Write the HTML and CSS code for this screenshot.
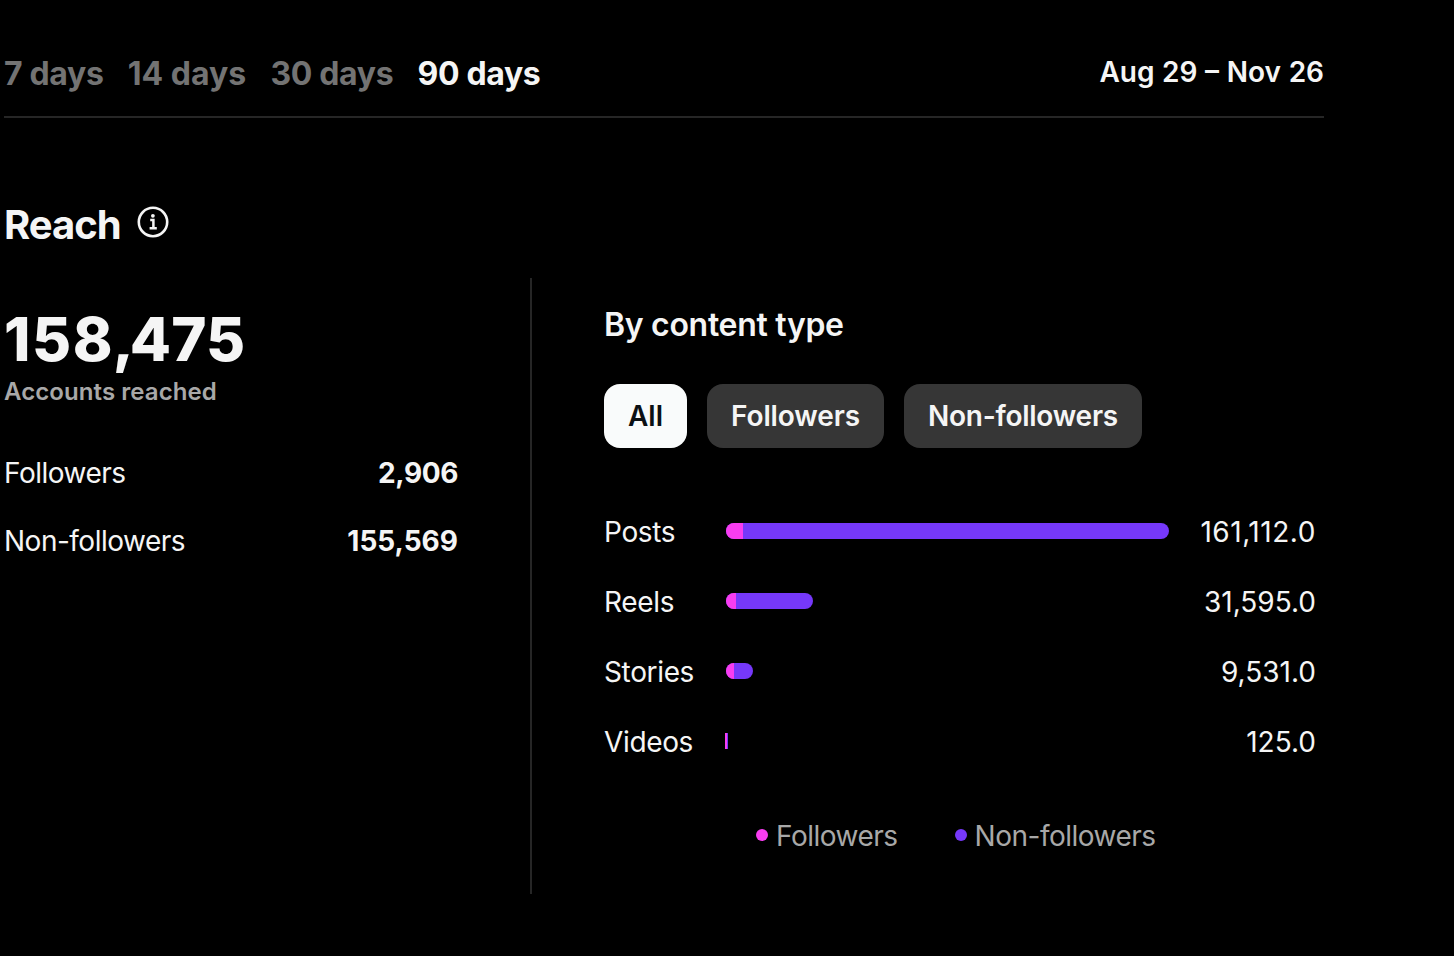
FILE: index.html
```html
<!DOCTYPE html>
<html lang="en">
<head>
    <meta charset="UTF-8">
    <meta name="viewport" content="width=device-width, initial-scale=1.0">
    <title>Reach</title>
    <link rel="stylesheet" href="styles.css">
</head>
<body>
    <div class="insights">
        <header class="topbar">
            <nav class="ranges">
                <a class="range">7 days</a>
                <a class="range range-14">14 days</a>
                <a class="range">30 days</a>
                <a class="range active">90 days</a>
            </nav>
            <div class="dates">Aug 29 – Nov 26</div>
        </header>

        <div class="heading">
            <h1>Reach</h1>
            <svg class="info" viewBox="0 0 32 32" fill="none" stroke="currentColor">
                <circle cx="16" cy="16" r="14.2" stroke-width="2.6"/>
                <path d="M13.2 14H16.4V22M12.6 22.3H19.8" stroke-width="2.5"/>
                <circle cx="15.9" cy="9.8" r="1.9" fill="currentColor" stroke="none"/>
            </svg>
        </div>

        <main class="columns">
            <section class="summary">
                <div class="total"><span class="thousands">158</span><span class="comma">,</span>475</div>
                <div class="caption">Accounts reached</div>
                <div class="stat">
                    <span class="label">Followers</span>
                    <strong class="tight">2,906</strong>
                </div>
                <div class="stat">
                    <span class="label">Non-followers</span>
                    <strong>155,569</strong>
                </div>
            </section>

            <section class="content-type">
                <h2>By content type</h2>
                <div class="filters">
                    <button class="filter selected">All</button>
                    <button class="filter">Followers</button>
                    <button class="filter">Non-followers</button>
                </div>
                <div class="chart">
                    <div class="row">
                        <span class="name">Posts</span>
                        <div class="bar" style="width: 443px"><i style="width: 17px"></i></div>
                        <span class="value loose">161,112.0</span>
                    </div>
                    <div class="row">
                        <span class="name">Reels</span>
                        <div class="bar" style="width: 87px"><i style="width: 10px"></i></div>
                        <span class="value">31,595.0</span>
                    </div>
                    <div class="row">
                        <span class="name">Stories</span>
                        <div class="bar" style="width: 27px"><i style="width: 8px"></i></div>
                        <span class="value">9,531.0</span>
                    </div>
                    <div class="row">
                        <span class="name">Videos</span>
                        <div class="bar tiny" style="width: 3px"><i style="width: 2px"></i></div>
                        <span class="value">125.0</span>
                    </div>
                </div>
                <div class="legend">
                    <span class="key"><i class="dot pink"></i><span class="label">Followers</span></span>
                    <span class="key"><i class="dot purple"></i><span class="label">Non-followers</span></span>
                </div>
            </section>
        </main>
    </div>
</body>
</html>
```
FILE: styles.css
```css
* {
    box-sizing: border-box;
}
body {
    margin: 0;
    background-color: #000;
    color: #f5f5f5;
    font-family: Inter, "Liberation Sans", sans-serif;
    font-size: 28px;
    line-height: 36px;
}
h1, h2 {
    margin: 0;
}
.insights {
    width: 1324px;
    height: 956px;
    padding-left: 4px;
}
.topbar {
    display: flex;
    justify-content: space-between;
    align-items: flex-start;
    height: 118px;
    padding-top: 54px;
    border-bottom: 2px solid #262626;
}
.ranges {
    display: flex;
    gap: 24.3px;
    padding-top: 2px;
    font-size: 32px;
    font-weight: 700;
    color: #737373;
}
.range {
    letter-spacing: -0.35px;
}
.range-14 {
    letter-spacing: 0;
}
.active {
    color: #f5f5f5;
}
.dates {
    font-weight: 600;
    word-spacing: 0.6px;
}
.heading {
    display: flex;
    gap: 16px;
    height: 160px;
    padding-top: 83px;
}
h1 {
    font-size: 40px;
    font-weight: 700;
    line-height: 48px;
    letter-spacing: -1px;
}
.info {
    width: 32px;
    height: 32px;
    margin-top: 5px;
}
.columns {
    display: flex;
    height: 616px;
}
.summary {
    width: 528px;
    padding: 25px 72px 0 0;
    border-right: 2px solid #262626;
}
.total {
    font-size: 60px;
    font-weight: 800;
    line-height: 72px;
    letter-spacing: 0.2px;
}
.thousands {
    letter-spacing: 1.6px;
}
.comma {
    margin-left: -1.5px;
    letter-spacing: -4.2px;
}
.caption {
    margin: 1px 0 47px;
    font-size: 24px;
    font-weight: 600;
    line-height: 32px;
    letter-spacing: 0.08px;
    color: #a8a8a8;
}
.stat {
    display: flex;
    justify-content: space-between;
    margin-bottom: 32px;
}
.label {
    letter-spacing: -0.5px;
}
strong {
    font-weight: 700;
}
.tight {
    letter-spacing: -0.4px;
}
.content-type {
    width: 792px;
    padding: 27px 8px 0 72px;
}
h2 {
    font-size: 32px;
    font-weight: 600;
    line-height: 40px;
    letter-spacing: -0.3px;
}
.filters {
    display: flex;
    gap: 20px;
    margin-top: 39px;
}
.filter {
    height: 64px;
    padding: 0 24px;
    border: none;
    border-radius: 16px;
    background-color: #363636;
    color: #f5f5f5;
    font: inherit;
    font-weight: 600;
    letter-spacing: -0.12px;
}
.filter:last-child {
    letter-spacing: -0.25px;
}
.selected {
    background-color: #f9fbfb;
    color: #0c1014;
    letter-spacing: 0;
}
.chart {
    margin-top: 48px;
}
.row {
    display: flex;
    align-items: center;
    height: 70px;
}
.name {
    width: 122px;
    padding-top: 2px;
    letter-spacing: -0.35px;
}
.bar {
    height: 16px;
    border-radius: 8px;
    background-color: #7638fa;
    overflow: hidden;
}
.bar i {
    display: block;
    height: 16px;
    background-color: #f83df0;
}
.tiny {
    border-radius: 0;
    margin-left: -1px;
}
.value {
    margin-left: auto;
    padding-top: 2px;
}
.loose {
    letter-spacing: 0.55px;
}
.legend {
    display: flex;
    gap: 57px;
    margin: 42px 0 0 152px;
    color: #a8a8a8;
}
.key {
    display: flex;
    align-items: center;
    gap: 8px;
}
.dot {
    width: 12px;
    height: 12px;
    margin-bottom: 2px;
    border-radius: 50%;
}
.pink {
    background-color: #f83df0;
}
.purple {
    background-color: #7638fa;
}
```
